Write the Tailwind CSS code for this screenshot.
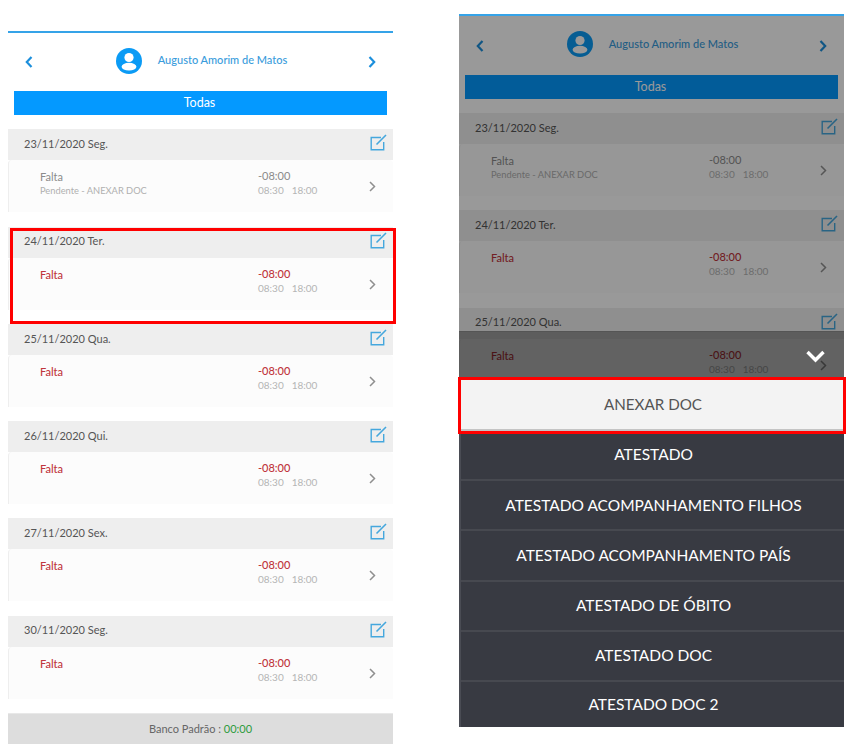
<!DOCTYPE html>
<html lang="pt"><head><meta charset="utf-8"><script src="https://cdn.jsdelivr.net/npm/@tailwindcss/browser@4"></script></head>
<body class="bg-white">
<div class="relative w-[854px] h-[751px] overflow-hidden flex items-start pl-2 gap-[66px] font-['Lato',sans-serif]">

<!-- LEFT PHONE -->
<section class="w-[385px] h-[713px] mt-[31px] shrink-0 flex flex-col bg-white border-t-2 border-[#35a3e8]">
  <header class="h-[59px] flex items-center justify-between pl-[17px] pr-[17px]">
    <svg class="w-2 h-3" viewBox="0 0 8 12" fill="none" stroke="#1c8fdc" stroke-width="2.2"><path d="M6.5 1 1.8 6l4.7 5"/></svg>
    <div class="flex items-center gap-4 ml-[2px] pb-[3px]">
      <svg class="w-[26px] h-[26px]" viewBox="0 0 26 26"><circle cx="13" cy="13" r="13" fill="#0b9bf5"/><circle cx="13" cy="9.5" r="4.6" fill="#fff"/><ellipse cx="13" cy="18.7" rx="7.4" ry="3.9" fill="#fff"/></svg>
      <span class="text-[11px] font-medium text-[#3a9cdc]">Augusto Amorim de Matos</span>
    </div>
    <svg class="w-2 h-3" viewBox="0 0 8 12" fill="none" stroke="#1c8fdc" stroke-width="2.2"><path d="M1.5 1 6.2 6l-4.7 5"/></svg>
  </header>
  <div class="mx-[6px] h-[24px] shrink-0 pr-[2px] bg-[#0499ff] text-white text-[12.5px] flex items-center justify-center">Todas</div>
  <div class="mt-[14px] flex flex-col">
    <article class="h-[97.3px]">
      <div class="h-[31px] pb-[1px] bg-[#eeeeee] flex items-center justify-between pl-4 pr-[6px] text-[11px] text-[#555]">23/11/2020 Seg.<svg class="w-[17px] h-[17px] mb-[3px]" viewBox="0 0 17 17" fill="none" stroke="#45a7dd"><path stroke-width="1.4" d="M11 3.5H1.2v12.3h12.5V8"/><path stroke-width="1.6" d="M6.5 10.5 16 1"/></svg></div>
      <div class="h-[52px] bg-[#fcfcfc] border-l border-[#eee] rounded-t-sm flex">
        <div class="w-[249px] pl-[31px] pt-[9px]"><p class="text-[11px] leading-[16px] text-[#8b8b8b]">Falta</p><p class="text-[9.3px] leading-[12px] text-[#b0b0b0]">Pendente - ANEXAR DOC</p></div>
        <div class="w-[111px] pt-[8px]"><p class="text-[11px] leading-[16px] text-[#8b8b8b]">-08:00</p><p class="text-[10px] leading-[13px] text-[#b5b5b5] flex gap-2"><span>08:30</span><span>18:00</span></p></div>
        <svg class="w-[7px] h-[11px] mt-[21px]" viewBox="0 0 7 11" fill="none" stroke="#8f8f8f" stroke-width="1.5"><path d="M1 1l4.5 4.5L1 10"/></svg>
      </div>
    </article>
    <article class="h-[97.3px]">
      <div class="h-[31px] pb-[1px] bg-[#eeeeee] flex items-center justify-between pl-4 pr-[6px] text-[11px] text-[#555]">24/11/2020 Ter.<svg class="w-[17px] h-[17px] mb-[3px]" viewBox="0 0 17 17" fill="none" stroke="#45a7dd"><path stroke-width="1.4" d="M11 3.5H1.2v12.3h12.5V8"/><path stroke-width="1.6" d="M6.5 10.5 16 1"/></svg></div>
      <div class="h-[52px] bg-[#fcfcfc] border-l border-[#eee] rounded-t-sm flex">
        <div class="w-[249px] pl-[31px] pt-[9px]"><p class="text-[11px] leading-[16px] font-medium text-[#c0363d]">Falta</p></div>
        <div class="w-[111px] pt-[8px]"><p class="text-[11px] leading-[16px] font-medium text-[#c0363d]">-08:00</p><p class="text-[10px] leading-[13px] text-[#b5b5b5] flex gap-2"><span>08:30</span><span>18:00</span></p></div>
        <svg class="w-[7px] h-[11px] mt-[21px]" viewBox="0 0 7 11" fill="none" stroke="#8f8f8f" stroke-width="1.5"><path d="M1 1l4.5 4.5L1 10"/></svg>
      </div>
    </article>
    <article class="h-[97.3px]">
      <div class="h-[31px] pb-[1px] bg-[#eeeeee] flex items-center justify-between pl-4 pr-[6px] text-[11px] text-[#555]">25/11/2020 Qua.<svg class="w-[17px] h-[17px] mb-[3px]" viewBox="0 0 17 17" fill="none" stroke="#45a7dd"><path stroke-width="1.4" d="M11 3.5H1.2v12.3h12.5V8"/><path stroke-width="1.6" d="M6.5 10.5 16 1"/></svg></div>
      <div class="h-[52px] bg-[#fcfcfc] border-l border-[#eee] rounded-t-sm flex">
        <div class="w-[249px] pl-[31px] pt-[9px]"><p class="text-[11px] leading-[16px] font-medium text-[#c0363d]">Falta</p></div>
        <div class="w-[111px] pt-[8px]"><p class="text-[11px] leading-[16px] font-medium text-[#c0363d]">-08:00</p><p class="text-[10px] leading-[13px] text-[#b5b5b5] flex gap-2"><span>08:30</span><span>18:00</span></p></div>
        <svg class="w-[7px] h-[11px] mt-[21px]" viewBox="0 0 7 11" fill="none" stroke="#8f8f8f" stroke-width="1.5"><path d="M1 1l4.5 4.5L1 10"/></svg>
      </div>
    </article>
    <article class="h-[97.3px]">
      <div class="h-[31px] pb-[1px] bg-[#eeeeee] flex items-center justify-between pl-4 pr-[6px] text-[11px] text-[#555]">26/11/2020 Qui.<svg class="w-[17px] h-[17px] mb-[3px]" viewBox="0 0 17 17" fill="none" stroke="#45a7dd"><path stroke-width="1.4" d="M11 3.5H1.2v12.3h12.5V8"/><path stroke-width="1.6" d="M6.5 10.5 16 1"/></svg></div>
      <div class="h-[52px] bg-[#fcfcfc] border-l border-[#eee] rounded-t-sm flex">
        <div class="w-[249px] pl-[31px] pt-[9px]"><p class="text-[11px] leading-[16px] font-medium text-[#c0363d]">Falta</p></div>
        <div class="w-[111px] pt-[8px]"><p class="text-[11px] leading-[16px] font-medium text-[#c0363d]">-08:00</p><p class="text-[10px] leading-[13px] text-[#b5b5b5] flex gap-2"><span>08:30</span><span>18:00</span></p></div>
        <svg class="w-[7px] h-[11px] mt-[21px]" viewBox="0 0 7 11" fill="none" stroke="#8f8f8f" stroke-width="1.5"><path d="M1 1l4.5 4.5L1 10"/></svg>
      </div>
    </article>
    <article class="h-[97.3px]">
      <div class="h-[31px] pb-[1px] bg-[#eeeeee] flex items-center justify-between pl-4 pr-[6px] text-[11px] text-[#555]">27/11/2020 Sex.<svg class="w-[17px] h-[17px] mb-[3px]" viewBox="0 0 17 17" fill="none" stroke="#45a7dd"><path stroke-width="1.4" d="M11 3.5H1.2v12.3h12.5V8"/><path stroke-width="1.6" d="M6.5 10.5 16 1"/></svg></div>
      <div class="h-[52px] bg-[#fcfcfc] border-l border-[#eee] rounded-t-sm flex">
        <div class="w-[249px] pl-[31px] pt-[9px]"><p class="text-[11px] leading-[16px] font-medium text-[#c0363d]">Falta</p></div>
        <div class="w-[111px] pt-[8px]"><p class="text-[11px] leading-[16px] font-medium text-[#c0363d]">-08:00</p><p class="text-[10px] leading-[13px] text-[#b5b5b5] flex gap-2"><span>08:30</span><span>18:00</span></p></div>
        <svg class="w-[7px] h-[11px] mt-[21px]" viewBox="0 0 7 11" fill="none" stroke="#8f8f8f" stroke-width="1.5"><path d="M1 1l4.5 4.5L1 10"/></svg>
      </div>
    </article>
    <article class="h-[97.3px]">
      <div class="h-[31px] pb-[1px] bg-[#eeeeee] flex items-center justify-between pl-4 pr-[6px] text-[11px] text-[#555]">30/11/2020 Seg.<svg class="w-[17px] h-[17px] mb-[3px]" viewBox="0 0 17 17" fill="none" stroke="#45a7dd"><path stroke-width="1.4" d="M11 3.5H1.2v12.3h12.5V8"/><path stroke-width="1.6" d="M6.5 10.5 16 1"/></svg></div>
      <div class="h-[52px] bg-[#fcfcfc] border-l border-[#eee] rounded-t-sm flex">
        <div class="w-[249px] pl-[31px] pt-[9px]"><p class="text-[11px] leading-[16px] font-medium text-[#c0363d]">Falta</p></div>
        <div class="w-[111px] pt-[8px]"><p class="text-[11px] leading-[16px] font-medium text-[#c0363d]">-08:00</p><p class="text-[10px] leading-[13px] text-[#b5b5b5] flex gap-2"><span>08:30</span><span>18:00</span></p></div>
        <svg class="w-[7px] h-[11px] mt-[21px]" viewBox="0 0 7 11" fill="none" stroke="#8f8f8f" stroke-width="1.5"><path d="M1 1l4.5 4.5L1 10"/></svg>
      </div>
    </article>
  </div>
  <footer class="mt-auto h-[31px] shrink-0 bg-[#dddddd] border-t border-[#e8e8e8] flex items-center justify-center text-[11px] text-[#666]">Banco Padrão :&nbsp;<span class="text-[#2e9b3c]">00:00</span></footer>
</section>

<!-- RIGHT PHONE -->
<section class="relative w-[385px] h-[713px] mt-[14px] shrink-0 overflow-hidden flex flex-col bg-white border-t-2 border-[#35a3e8]">
  <header class="h-[59px] shrink-0 flex items-center justify-between pl-[17px] pr-[17px]">
    <svg class="w-2 h-3" viewBox="0 0 8 12" fill="none" stroke="#1c8fdc" stroke-width="2.2"><path d="M6.5 1 1.8 6l4.7 5"/></svg>
    <div class="flex items-center gap-4 ml-[2px] pb-[3px]">
      <svg class="w-[26px] h-[26px]" viewBox="0 0 26 26"><circle cx="13" cy="13" r="13" fill="#0b9bf5"/><circle cx="13" cy="9.5" r="4.6" fill="#fff"/><ellipse cx="13" cy="18.7" rx="7.4" ry="3.9" fill="#fff"/></svg>
      <span class="text-[11px] font-medium text-[#3a9cdc]">Augusto Amorim de Matos</span>
    </div>
    <svg class="w-2 h-3" viewBox="0 0 8 12" fill="none" stroke="#1c8fdc" stroke-width="2.2"><path d="M1.5 1 6.2 6l-4.7 5"/></svg>
  </header>
  <div class="mx-[6px] h-[24px] shrink-0 pr-[2px] bg-[#0499ff] text-white text-[12.5px] flex items-center justify-center">Todas</div>
  <div class="mt-[14px] flex flex-col">
    <article class="h-[97.3px]">
      <div class="h-[31px] pb-[1px] bg-[#eeeeee] flex items-center justify-between pl-4 pr-[6px] text-[11px] text-[#555]">23/11/2020 Seg.<svg class="w-[17px] h-[17px] mb-[3px]" viewBox="0 0 17 17" fill="none" stroke="#45a7dd"><path stroke-width="1.4" d="M11 3.5H1.2v12.3h12.5V8"/><path stroke-width="1.6" d="M6.5 10.5 16 1"/></svg></div>
      <div class="h-[52px] bg-[#fcfcfc] border-l border-[#eee] rounded-t-sm flex">
        <div class="w-[249px] pl-[31px] pt-[9px]"><p class="text-[11px] leading-[16px] text-[#8b8b8b]">Falta</p><p class="text-[9.3px] leading-[12px] text-[#b0b0b0]">Pendente - ANEXAR DOC</p></div>
        <div class="w-[111px] pt-[8px]"><p class="text-[11px] leading-[16px] text-[#8b8b8b]">-08:00</p><p class="text-[10px] leading-[13px] text-[#b5b5b5] flex gap-2"><span>08:30</span><span>18:00</span></p></div>
        <svg class="w-[7px] h-[11px] mt-[21px]" viewBox="0 0 7 11" fill="none" stroke="#8f8f8f" stroke-width="1.5"><path d="M1 1l4.5 4.5L1 10"/></svg>
      </div>
    </article>
    <article class="h-[97.3px]">
      <div class="h-[31px] pb-[1px] bg-[#eeeeee] flex items-center justify-between pl-4 pr-[6px] text-[11px] text-[#555]">24/11/2020 Ter.<svg class="w-[17px] h-[17px] mb-[3px]" viewBox="0 0 17 17" fill="none" stroke="#45a7dd"><path stroke-width="1.4" d="M11 3.5H1.2v12.3h12.5V8"/><path stroke-width="1.6" d="M6.5 10.5 16 1"/></svg></div>
      <div class="h-[52px] bg-[#fcfcfc] border-l border-[#eee] rounded-t-sm flex">
        <div class="w-[249px] pl-[31px] pt-[9px]"><p class="text-[11px] leading-[16px] font-medium text-[#c0363d]">Falta</p></div>
        <div class="w-[111px] pt-[8px]"><p class="text-[11px] leading-[16px] font-medium text-[#c0363d]">-08:00</p><p class="text-[10px] leading-[13px] text-[#b5b5b5] flex gap-2"><span>08:30</span><span>18:00</span></p></div>
        <svg class="w-[7px] h-[11px] mt-[21px]" viewBox="0 0 7 11" fill="none" stroke="#8f8f8f" stroke-width="1.5"><path d="M1 1l4.5 4.5L1 10"/></svg>
      </div>
    </article>
    <article class="h-[97.3px]">
      <div class="h-[31px] pb-[1px] bg-[#eeeeee] flex items-center justify-between pl-4 pr-[6px] text-[11px] text-[#555]">25/11/2020 Qua.<svg class="w-[17px] h-[17px] mb-[3px]" viewBox="0 0 17 17" fill="none" stroke="#45a7dd"><path stroke-width="1.4" d="M11 3.5H1.2v12.3h12.5V8"/><path stroke-width="1.6" d="M6.5 10.5 16 1"/></svg></div>
      <div class="h-[52px] bg-[#fcfcfc] border-l border-[#eee] rounded-t-sm flex">
        <div class="w-[249px] pl-[31px] pt-[9px]"><p class="text-[11px] leading-[16px] font-medium text-[#c0363d]">Falta</p></div>
        <div class="w-[111px] pt-[8px]"><p class="text-[11px] leading-[16px] font-medium text-[#c0363d]">-08:00</p><p class="text-[10px] leading-[13px] text-[#b5b5b5] flex gap-2"><span>08:30</span><span>18:00</span></p></div>
        <svg class="w-[7px] h-[11px] mt-[21px]" viewBox="0 0 7 11" fill="none" stroke="#8f8f8f" stroke-width="1.5"><path d="M1 1l4.5 4.5L1 10"/></svg>
      </div>
    </article>
  </div>
  <!-- dim layer and action sheet -->
  <div class="absolute inset-0 bg-black/40"></div>
  <div class="absolute left-0 right-0 top-[315px] bottom-0 flex flex-col">
    <div class="h-[48px] shrink-0 bg-black/35 border-t border-[#555] flex justify-end pr-[19px] pt-[18px]">
      <svg class="w-[19px] h-[13px]" viewBox="0 0 19 13" fill="none" stroke="#fff" stroke-width="3.4"><path d="M1.5 2 9.5 10l8-8"/></svg>
    </div>
    <div class="h-[52px] shrink-0 pl-[3px] pt-[1px] bg-[#f3f3f3] border-b-2 border-[#c4c4c4] flex items-center justify-center text-[15.2px] text-[#555]">ANEXAR DOC</div>
    <div class="flex-1 bg-[#383a42] border-l-2 border-[#4a4c54] text-white text-[15.5px] flex flex-col">
      <div class="h-[50.2px] shrink-0 pl-[2px] flex items-center justify-center border-b-2 border-[#474950]">ATESTADO</div>
      <div class="h-[50.2px] shrink-0 pl-[2px] flex items-center justify-center border-b-2 border-[#474950]">ATESTADO ACOMPANHAMENTO FILHOS</div>
      <div class="h-[50.2px] shrink-0 pl-[2px] flex items-center justify-center border-b-2 border-[#474950]">ATESTADO ACOMPANHAMENTO PAÍS</div>
      <div class="h-[50.2px] shrink-0 pl-[2px] flex items-center justify-center border-b-2 border-[#474950]">ATESTADO DE ÓBITO</div>
      <div class="h-[50.2px] shrink-0 pl-[2px] flex items-center justify-center border-b-2 border-[#474950]">ATESTADO DOC</div>
      <div class="h-[46px] shrink-0 pl-[2px] flex items-center justify-center">ATESTADO DOC 2</div>
    </div>
  </div>
</section>

<!-- red highlight boxes -->
<div class="absolute left-[10px] top-[228px] w-[386px] h-[96px] border-[3px] border-[#ff0000]"></div>
<div class="absolute left-[458px] top-[377px] w-[388px] h-[57px] border-[3px] border-[#ff0000]"></div>
</div>
</body></html>
